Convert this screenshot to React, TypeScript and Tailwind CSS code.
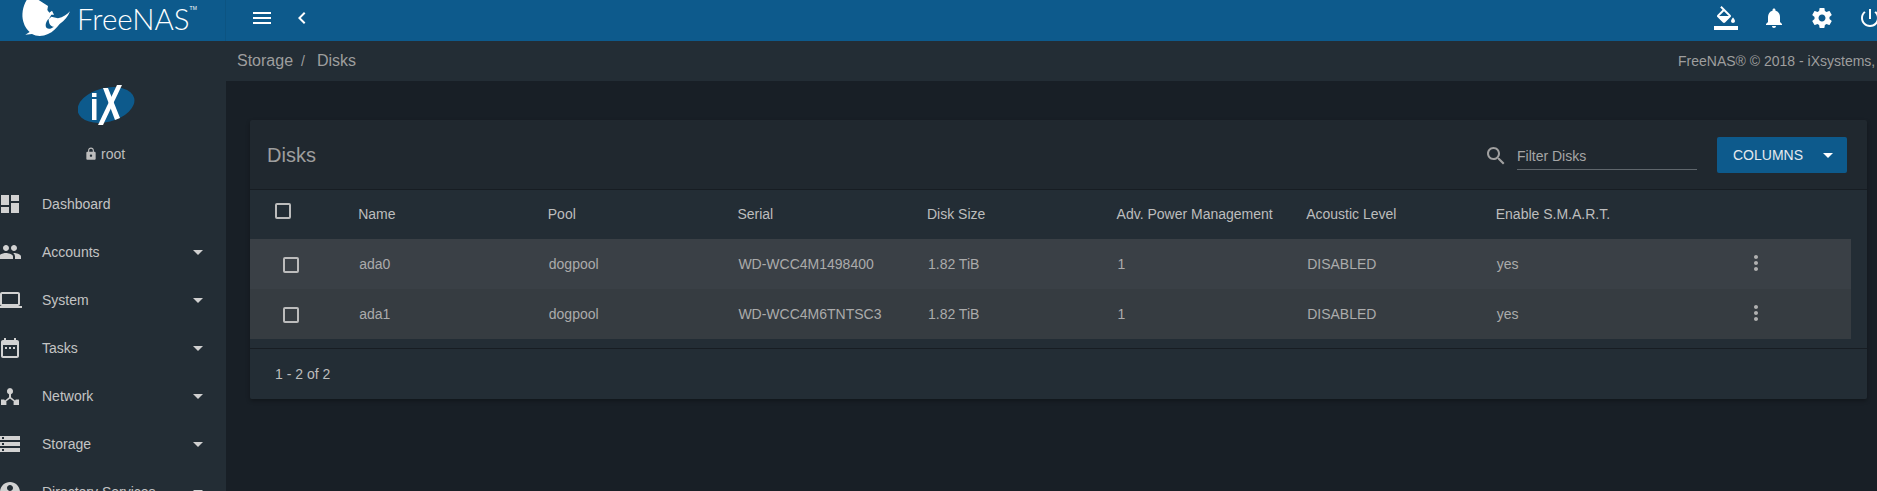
import type { ReactNode } from 'react'

const Icon = ({ d, className = '' }: { d: string; className?: string }) => (
	<svg viewBox="0 0 24 24" className={`h-6 w-6 shrink-0 fill-current ${className}`}><path d={d} /></svg>
)

const ICONS = {
	dashboard: 'M3 13h8V3H3v10zm0 8h8v-6H3v6zm10 0h8V11h-8v10zm0-18v6h8V3h-8z',
	people: 'M16 11c1.66 0 2.99-1.34 2.99-3S17.66 5 16 5c-1.66 0-3 1.34-3 3s1.34 3 3 3zm-8 0c1.66 0 2.99-1.34 2.99-3S9.66 5 8 5C6.34 5 5 6.34 5 8s1.34 3 3 3zm0 2c-2.33 0-7 1.17-7 3.5V19h14v-2.5c0-2.33-4.67-3.5-7-3.5zm8 0c-.29 0-.62.02-.97.05 1.16.84 1.97 1.97 1.97 3.45V19h6v-2.5c0-2.33-4.67-3.5-7-3.5z',
	laptop: 'M20 18c1.1 0 1.99-.9 1.99-2L22 6c0-1.1-.9-2-2-2H4c-1.1 0-2 .9-2 2v10c0 1.1.9 2 2 2H0v2h24v-2h-4zM4 6h16v10H4V6z',
	tasks: 'M9 11H7v2h2v-2zm4 0h-2v2h2v-2zm4 0h-2v2h2v-2zm2-7h-1V2h-2v2H8V2H6v2H5c-1.11 0-1.99.9-1.99 2L3 20c0 1.1.89 2 2 2h14c1.1 0 2-.9 2-2V6c0-1.1-.9-2-2-2zm0 16H5V9h14v11z',
	network: 'M12 4a3.2 3.2 0 0 0-1 6.2v3.1l-4 3.2-.8-.9H3v5.4h5.4v-3.2l-.3-.4L12 14.6l3.9 2.8-.3.4V21H21v-5.4h-3.2l-.8.9-4-3.2v-3.1A3.2 3.2 0 0 0 12 4z',
	storage: 'M2 20h20v-4H2v4zm2-3h2v2H4v-2zM2 4v4h20V4H2zm4 3H4V5h2v2zm-4 7h20v-4H2v4zm2-3h2v2H4v-2z',
	directory: 'M12 2C6.48 2 2 6.48 2 12s4.48 10 10 10 10-4.48 10-10S17.52 2 12 2zm0 3c1.66 0 3 1.34 3 3s-1.34 3-3 3-3-1.34-3-3 1.34-3 3-3zm0 14.2c-2.5 0-4.71-1.28-6-3.22.03-1.99 4-3.08 6-3.08 1.99 0 5.97 1.09 6 3.08-1.29 1.94-3.5 3.22-6 3.22z',
	menu: 'M3 18h18v-2H3v2zm0-5h18v-2H3v2zm0-7v2h18V6H3z',
	chevron: 'M15.41 7.41L14 6l-6 6 6 6 1.41-1.41L10.83 12z',
	fill: 'M16.56 8.94L7.62 0 6.21 1.41l2.38 2.38-5.15 5.15c-.59.59-.59 1.54 0 2.12l5.5 5.5c.29.29.68.44 1.06.44s.77-.15 1.06-.44l5.5-5.5c.59-.58.59-1.53 0-2.12zM5.21 10L10 5.21 14.79 10H5.21zM19 11.5s-2 2.17-2 3.5c0 1.1.9 2 2 2s2-.9 2-2c0-1.33-2-3.5-2-3.5zM0 20h24v4H0z',
	bell: 'M12 22c1.1 0 2-.9 2-2h-4c0 1.1.89 2 2 2zm6-6v-5c0-3.07-1.64-5.64-4.5-6.32V4c0-.83-.67-1.5-1.5-1.5s-1.5.67-1.5 1.5v.68C7.63 5.36 6 7.92 6 11v5l-2 2v1h16v-1l-2-2z',
	gear: 'M19.43 12.98c.04-.32.07-.64.07-.98s-.03-.66-.07-.98l2.11-1.65c.19-.15.24-.42.12-.64l-2-3.46c-.12-.22-.39-.3-.61-.22l-2.49 1c-.52-.4-1.08-.73-1.69-.98l-.38-2.65C14.46 2.18 14.25 2 14 2h-4c-.25 0-.46.18-.49.42l-.38 2.65c-.61.25-1.17.59-1.69.98l-2.49-1c-.23-.09-.49 0-.61.22l-2 3.46c-.13.22-.07.49.12.64l2.11 1.65c-.04.32-.07.65-.07.98s.03.66.07.98l-2.11 1.65c-.19.15-.24.42-.12.64l2 3.46c.12.22.39.3.61.22l2.49-1c.52.4 1.08.73 1.69.98l.38 2.65c.03.24.24.42.49.42h4c.25 0 .46-.18.49-.42l.38-2.65c.61-.25 1.17-.59 1.69-.98l2.49 1c.23.09.49 0 .61-.22l2-3.46c.12-.22.07-.49-.12-.64l-2.11-1.65zM12 15.5c-1.93 0-3.5-1.57-3.5-3.5s1.57-3.5 3.5-3.5 3.5 1.57 3.5 3.5-1.57 3.5-3.5 3.5z',
	power: 'M13 3h-2v10h2V3zm4.83 2.17l-1.42 1.42C17.99 7.86 19 9.81 19 12c0 3.87-3.13 7-7 7s-7-3.13-7-7c0-2.19 1.01-4.14 2.58-5.42L6.17 5.17C4.23 6.82 3 9.26 3 12c0 4.97 4.03 9 9 9s9-4.03 9-9c0-2.74-1.23-5.18-3.17-6.83z',
	search: 'M15.5 14h-.79l-.28-.27C15.41 12.59 16 11.11 16 9.5 16 5.91 13.09 3 9.5 3S3 5.91 3 9.5 5.91 16 9.5 16c1.61 0 3.09-.59 4.23-1.57l.27.28v.79l5 4.99L20.49 19l-4.99-5zm-6 0C7.01 14 5 11.99 5 9.5S7.01 5 9.5 5 14 7.01 14 9.5 11.99 14 9.5 14z',
	lock: 'M18 8h-1V6c0-2.76-2.24-5-5-5S7 3.24 7 6v2H6c-1.1 0-2 .9-2 2v10c0 1.1.9 2 2 2h12c1.1 0 2-.9 2-2V10c0-1.1-.9-2-2-2zm-6 9c-1.1 0-2-.9-2-2s.9-2 2-2 2 .9 2 2-.9 2-2 2zm3.1-9H8.9V6c0-1.71 1.39-3.1 3.1-3.1 1.71 0 3.1 1.39 3.1 3.1v2z',
	dots: 'M12 8c1.1 0 2-.9 2-2s-.9-2-2-2-2 .9-2 2 .9 2 2 2zm0 2c-1.1 0-2 .9-2 2s.9 2 2 2 2-.9 2-2-.9-2-2-2zm0 6c-1.1 0-2 .9-2 2s.9 2 2 2 2-.9 2-2-.9-2-2-2z',
}

const NAV = [
	{ label: 'Dashboard', icon: ICONS.dashboard, caret: false },
	{ label: 'Accounts', icon: ICONS.people, caret: true },
	{ label: 'System', icon: ICONS.laptop, caret: true },
	{ label: 'Tasks', icon: ICONS.tasks, caret: true },
	{ label: 'Network', icon: ICONS.network, caret: true },
	{ label: 'Storage', icon: ICONS.storage, caret: true },
	{ label: 'Directory Services', icon: ICONS.directory, caret: true },
]

const COLUMNS = ['Name', 'Pool', 'Serial', 'Disk Size', 'Adv. Power Management', 'Acoustic Level', 'Enable S.M.A.R.T.']

const ROWS = [
	{ bg: 'bg-[#3a4046]', cells: ['ada0', 'dogpool', 'WD-WCC4M1498400', '1.82 TiB', '1', 'DISABLED', 'yes'] },
	{ bg: 'bg-[#363c41]', cells: ['ada1', 'dogpool', 'WD-WCC4M6TNTSC3', '1.82 TiB', '1', 'DISABLED', 'yes'] },
]

const Caret = ({ className = '' }: { className?: string }) => (
	<span className={`h-0 w-0 border-x-[5px] border-t-[5px] border-x-transparent ${className}`} />
)

const Checkbox = () => <span className="block h-4 w-4 rounded-[2px] border-2 border-[#bcbcbc]" />

const Cell = ({ children }: { children: ReactNode }) => (
	<div className="w-[189.6px] shrink-0 whitespace-nowrap">{children}</div>
)

function Logo() {
	return (
		<div className="flex h-[41px] w-[226px] shrink-0 items-start overflow-hidden border-r border-[#0c5482] pl-[18px]">
			<svg viewBox="0 0 180 120" className="h-[40px] w-[60px] shrink-0 fill-white">
				<path d="M26 0 C14 20 10 45 16 65 C20 80 28 90 35 96 L22 104 L42 102 C55 110 75 110 90 102 C105 96 115 85 125 72 C140 62 150 50 156 34 C148 44 135 52 120 55 L100 50 L92 58 L100 44 L108 44 L102 32 L94 38 L88 30 L90 18 L62 0 Z" />
				<path className="fill-[#0d5a8c]" d="M92 56 C84 64 80 76 86 84 C92 88 100 86 108 80 C100 80 92 74 92 56 Z" />
			</svg>
			<span className="ml-[-1px] mt-[1px] font-['Lato',sans-serif] text-[29.5px] font-light leading-[36px] text-white">FreeNAS</span>
			<span className="mt-[5px] text-[5px] leading-[6px] text-white">TM</span>
		</div>
	)
}

function Sidebar() {
	return (
		<aside className="flex w-[226px] shrink-0 flex-col overflow-hidden bg-[#232d35]">
			<div className="flex flex-col items-start pt-[43px] pb-[18px]">
				<svg viewBox="0 0 58 44" className="ml-[78px] h-[44px] w-[58px]">
					<ellipse cx="28" cy="21" rx="29" ry="17" transform="rotate(-14 28 21)" className="fill-[#0d5a8c]" />
					<rect x="14" y="15" width="4.5" height="21" className="fill-white" />
					<rect x="14" y="9" width="4.5" height="4" className="fill-white" />
					<path className="fill-white" d="M39 1 L44 1 L25 41 L20 41 Z" />
					<path className="fill-white" d="M25 4 L30 4 L42 34 L37 36 Z" />
				</svg>
				<div className="ml-[84px] mt-[18px] flex items-center text-[14px] leading-[16px] text-[#bdbdbd]">
					<Icon d={ICONS.lock} className="mr-[3px] h-[14px] w-[14px]" />
					<span>root</span>
				</div>
			</div>
			{NAV.map((n) => (
				<div key={n.label} className="flex h-12 shrink-0 items-center text-[14px] text-[#c4c4c4]">
					<Icon d={n.icon} className="ml-[-2px] text-[#d2d2d2]" />
					<span className="ml-[20px] whitespace-nowrap">{n.label}</span>
					{n.caret && <Caret className="ml-auto mr-[23px] border-t-[#d0d0d0]" />}
				</div>
			))}
		</aside>
	)
}

function DisksCard() {
	return (
		<section className="ml-[24px] mr-[10px] mt-[39px] rounded-[2px] bg-[#20282f] text-[14px] shadow-[0_2px_4px_rgba(0,0,0,0.3)]">
			<div className="flex h-[70px] items-center border-b border-[#171d23] pl-[17px] pr-[20px]">
				<h2 className="text-[20px] font-normal text-[#9e9e9e]">Disks</h2>
				<Icon d={ICONS.search} className="ml-auto mt-[2px] text-[#a0a0a0]" />
				<div className="ml-[9px] mt-[2px] h-[29px] w-[180px] border-b border-[#5f666c] pt-[7px] text-[14px] leading-[16px] text-[#a6a6a6]">Filter Disks</div>
				<button className="ml-[20px] mt-[1px] flex h-9 w-[130px] items-center rounded-[2px] bg-[#0d5a8c] pl-[16px] text-[14px] text-[#e4e9ee]">
					COLUMNS
					<Caret className="ml-auto mr-[14px] border-t-white" />
				</button>
			</div>
			<div className="flex h-[49px] items-center bg-[#232d35] pb-[1px] text-[#bdbdbd]">
				<div className="w-[108.2px] shrink-0 pl-[25px]">
					<div className="mb-[6px]"><Checkbox /></div>
				</div>
				{COLUMNS.map((c) => <Cell key={c}>{c}</Cell>)}
			</div>
			{ROWS.map((r) => (
				<div key={r.cells[0]} className="bg-[#232d35] pr-[16px]">
					<div className={`flex h-[50px] items-center text-[#ababab] ${r.bg}`}>
						<div className="w-[109.2px] shrink-0 pl-[33px] pt-[2px]"><Checkbox /></div>
						{r.cells.map((c, i) => <Cell key={i}>{c}</Cell>)}
						<Icon d={ICONS.dots} className="ml-[58px] mt-[-3px] text-[#b0b0b0]" />
					</div>
				</div>
			))}
			<div className="h-[10px] border-b border-[#171d23] bg-[#232d35]" />
			<div className="flex h-[50px] items-center rounded-b-[2px] bg-[#232d35] pl-[25px] text-[#bdbdbd]">1 - 2 of 2</div>
		</section>
	)
}

export default function App() {
	return (
		<div className="flex h-[491px] w-[1877px] flex-col overflow-hidden bg-[#181f26] font-['Liberation_Sans',sans-serif]">
			<header className="flex h-[41px] shrink-0 bg-[#0d5a8c] text-white">
				<Logo />
				<div className="flex items-start gap-[16px] pl-[24px] pt-[6px]">
					<Icon d={ICONS.menu} />
					<Icon d={ICONS.chevron} />
				</div>
				<div className="ml-auto mr-[-5px] flex items-start gap-[24px] pt-[6px]">
					<Icon d={ICONS.fill} />
					<Icon d={ICONS.bell} />
					<Icon d={ICONS.gear} />
					<Icon d={ICONS.power} />
				</div>
			</header>
			<div className="flex min-h-0 flex-1">
				<Sidebar />
				<main className="min-w-0 flex-1">
					<div className="flex h-10 items-center bg-[#232d35] pl-[11px]">
						<span className="text-[16px] text-[#9e9e9e]">Storage</span>
						<span className="ml-[8px] text-[14px] text-[#9e9e9e]">/</span>
						<span className="ml-[12px] text-[16px] text-[#9e9e9e]">Disks</span>
						<span className="ml-auto w-[199px] shrink-0 overflow-hidden whitespace-nowrap text-[14px] text-[#9e9e9e]">FreeNAS® © 2018 - iXsystems, Inc.</span>
					</div>
					<DisksCard />
				</main>
			</div>
		</div>
	)
}
